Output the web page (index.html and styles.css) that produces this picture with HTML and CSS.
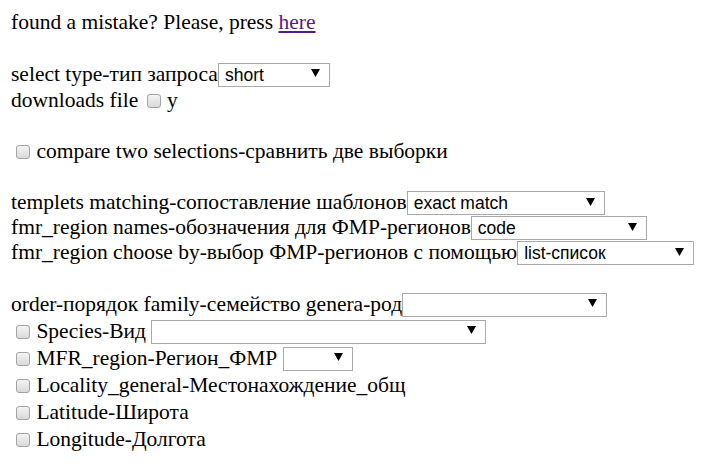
FILE: index.html
```html
<!DOCTYPE html>
<html lang="ru">
<head>
  <meta charset="UTF-8">
  <title>Query form</title>
  <link rel="stylesheet" href="styles.css">
</head>
<body>
  <form class="query-form">
    <div class="line">found a mistake? Please, press <a href="#">here</a></div>

    <div class="line gap-first">select type-тип запроса<span class="dropdown w-type"><select><option>short</option></select><svg class="arrow" viewBox="0 0 9 8"><path d="M0 0h9L4.5 8z"/></svg></span></div>
    <div class="line">downloads file <input type="checkbox" class="check"> y</div>

    <div class="line gap">
      <input type="checkbox" class="check lead"> compare two selections-сравнить две выборки
    </div>

    <div class="line gap">templets matching-сопоставление шаблонов<span class="dropdown w-templets"><select><option>exact match</option></select><svg class="arrow" viewBox="0 0 9 8"><path d="M0 0h9L4.5 8z"/></svg></span></div>
    <div class="line">fmr_region names-обозначения для ФМР-регионов<span class="dropdown w-names"><select><option>code</option></select><svg class="arrow" viewBox="0 0 9 8"><path d="M0 0h9L4.5 8z"/></svg></span></div>
    <div class="line">fmr_region choose by-выбор ФМР-регионов с помощью<span class="dropdown w-choose"><select><option>list-список</option></select><svg class="arrow" viewBox="0 0 9 8"><path d="M0 0h9L4.5 8z"/></svg></span></div>

    <div class="line gap tall">order-порядок family-семейство genera-род<span class="dropdown w-order"><select><option></option></select><svg class="arrow" viewBox="0 0 9 8"><path d="M0 0h9L4.5 8z"/></svg></span></div>
    <div class="line tall"><input type="checkbox" class="check lead"> Species-Вид <span class="dropdown w-species"><select><option></option></select><svg class="arrow" viewBox="0 0 9 8"><path d="M0 0h9L4.5 8z"/></svg></span></div>
    <div class="line tall"><input type="checkbox" class="check lead"> MFR_region-Регион_ФМР <span class="dropdown w-mfr"><select><option></option></select><svg class="arrow" viewBox="0 0 9 8"><path d="M0 0h9L4.5 8z"/></svg></span></div>
    <div class="line tall"><input type="checkbox" class="check lead"> Locality_general-Местонахождение_общ</div>
    <div class="line tall"><input type="checkbox" class="check lead"> Latitude-Широта</div>
    <div class="line tall"><input type="checkbox" class="check lead"> Longitude-Долгота</div>
  </form>
</body>
</html>
```
FILE: styles.css
```css
body {
  margin: 0;
  padding: 10px 11px;
  background-color: #fff;
  color: #000;
  font-family: "Liberation Serif", "Times New Roman", serif;
  font-size: 21.5px;
}

.line {
  height: 25px;
  line-height: 25px;
  white-space: nowrap;
}

.line.tall {
  height: 27px;
  line-height: 27px;
}

.gap-first {
  margin-top: 26px;
  height: 27px;
  line-height: 27px;
}

.gap {
  margin-top: 26px;
}

a {
  color: #551a8b;
}

/* dropdowns */
.dropdown {
  position: relative;
  display: inline-block;
  vertical-align: baseline;
}

.dropdown select {
  -webkit-appearance: none;
  appearance: none;
  width: 100%;
  height: 24px;
  margin: 0;
  padding: 0 20px 0 6px;
  border: 1px solid #a9a9a9;
  border-radius: 0;
  background: #fff;
  color: #000;
  font-family: "Liberation Sans", Arial, sans-serif;
  font-size: 17.5px;
  vertical-align: baseline;
}

.dropdown .arrow {
  position: absolute;
  right: 10px;
  top: 8px;
  width: 9px;
  height: 8px;
  fill: #000;
  pointer-events: none;
}

.w-type { width: 112px; }
.w-templets { width: 198px; }
.w-names { width: 176px; }
.w-choose { width: 177px; }
.w-order { width: 205px; }
.w-species { width: 335px; }
.w-mfr { width: 70px; }

/* checkboxes */
.check {
  -webkit-appearance: none;
  appearance: none;
  width: 14px;
  height: 14px;
  margin: 0 1px 0 3px;
  border: 1px solid #a3a3a3;
  border-radius: 3px;
  background: linear-gradient(#f4f4f4, #d9d9d9);
  vertical-align: -1px;
}

.check.lead {
  margin-left: 5px;
}
```
